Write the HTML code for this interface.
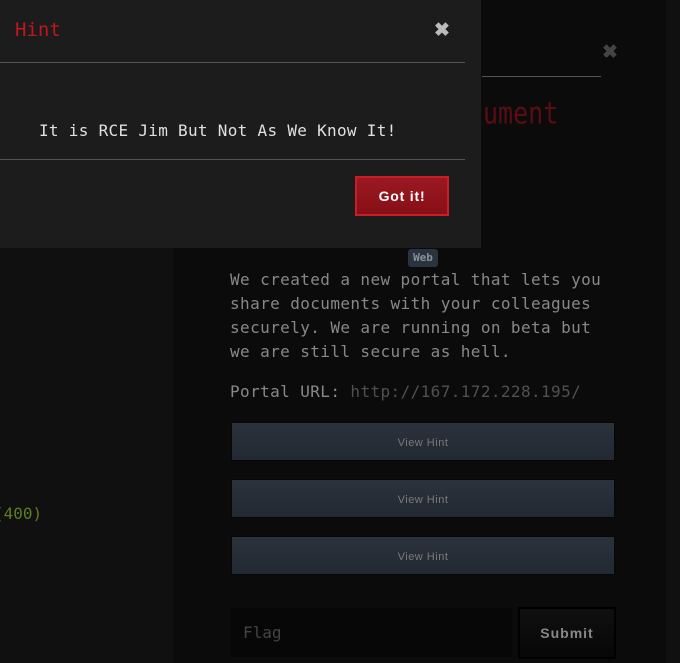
<!DOCTYPE html>
<html><head><meta charset="utf-8"><style>
*{margin:0;padding:0;box-sizing:border-box}
body{width:680px;height:663px;overflow:hidden;background:#101010;position:relative;font-family:"DejaVu Sans Mono","Liberation Mono",monospace}
.a{position:absolute}
.panel{left:173px;top:0;width:493px;height:663px;background:#0b0b0b}
.mono{font-family:"DejaVu Sans Mono",monospace}
.desc{left:230px;top:268px;color:#888;font-size:16px;line-height:24px;letter-spacing:0.4px;white-space:pre}
.hb{left:231px;width:384px;height:39px;background:linear-gradient(#2b323c,#222933);border:1px solid #060606;color:#7a7a7a;font:11px "Liberation Sans",sans-serif;text-align:center;line-height:40px;letter-spacing:0.5px}
.modal{left:0;top:0;width:481px;height:248px;background:#1c1c1c}
</style></head><body>
<div class="a panel"></div>
<div class="a" style="left:482px;top:76px;width:119px;height:1px;background:#555"></div>
<div class="a" style="left:602px;top:41px;color:#444;font:bold 19px 'Liberation Sans',sans-serif">&#x2716;</div>
<div class="a mono" style="left:483px;top:96px;color:#5a0d12;font-size:25px;transform:scaleY(1.2);transform-origin:left top">ument</div>
<div class="a" style="left:408px;top:249px;width:30px;height:18px;background:#2a3440;border-radius:3px;color:#8a8f96;font:bold 11px 'DejaVu Sans Mono',monospace;text-align:center;line-height:18px">Web</div>
<div class="a desc">We created a new portal that lets you
share documents with your colleagues
securely. We are running on beta but
we are still secure as hell.</div>
<div class="a desc" style="top:380px">Portal URL: <span style="color:#505050">http://167.172.228.195/</span></div>
<div class="a hb" style="top:422px">View Hint</div>
<div class="a hb" style="top:479px">View Hint</div>
<div class="a hb" style="top:536px">View Hint</div>
<div class="a" style="left:230px;top:608px;width:282px;height:49px;background:#070707;color:#444;font-size:16px;line-height:49px;padding-left:13px">Flag</div>
<div class="a" style="left:518px;top:607px;width:98px;height:52px;border:2px solid #000;background:linear-gradient(#101010,#070707);color:#888;font:bold 14px 'Liberation Sans',sans-serif;letter-spacing:1px;text-align:center;line-height:48px">Submit</div>
<div class="a mono" style="left:-6px;top:504px;color:#5d7d20;font-size:16px">(400)</div>
<div class="a modal"></div>
<div class="a mono" style="left:15px;top:19px;color:#c0171f;font-size:19px">Hint</div>
<div class="a" style="left:434px;top:19px;color:#bbb;font:bold 19px 'Liberation Sans',sans-serif">&#x2716;</div>
<div class="a" style="left:0;top:62px;width:465px;height:1px;background:#555"></div>
<div class="a mono" style="left:39px;top:121px;color:#e0e0e0;font-size:16px;letter-spacing:0.3px">It is RCE Jim But Not As We Know It!</div>
<div class="a" style="left:0;top:159px;width:465px;height:1px;background:#555"></div>
<div class="a" style="left:355px;top:176px;width:94px;height:40px;background:linear-gradient(#9a1821,#880f17);border:2px solid #c81e28;color:#fff;font:bold 14px 'Liberation Sans',sans-serif;letter-spacing:0.8px;text-align:center;line-height:36px">Got it!</div>
</body></html>
